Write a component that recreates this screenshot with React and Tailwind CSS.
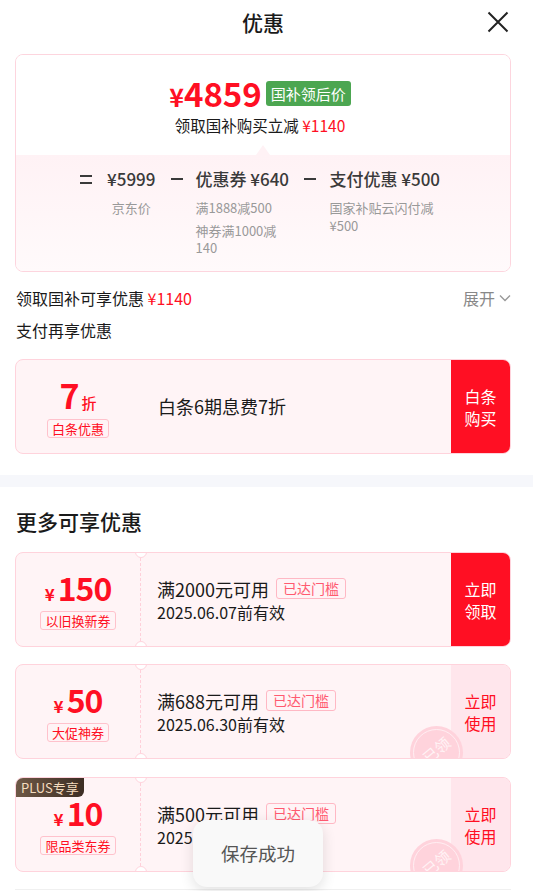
import React from "react";

const RED = "text-[#ff0f23]";

function Stamp({ top }) {
  return (
    <div
      className="absolute left-[394px] h-[53px] w-[53px] rounded-full bg-[#ffd3dc] p-[3px]"
      style={{ top }}
    >
      <div className="flex h-full w-full items-center justify-center rounded-full border border-[#ffeef2] bg-[#ffd3dc]">
        <span className="-mt-[6px] rotate-[-40deg] text-[15px] leading-none text-[#fff4f6]">已领</span>
      </div>
    </div>
  );
}

function Bar() {
  return <div className="h-[2px] w-[12px] bg-[#3a3a3a]" />;
}

function Coupon({ amount, label, cond, date, btn, claimed, plus, className = "" }) {
  return (
    <div
      className={
        "relative ml-[15px] mr-[22px] flex h-[95px] overflow-hidden rounded-[8px] border border-[#ffd3dc] bg-[#fff4f6] " +
        className
      }
    >
      <div className="absolute left-[119px] top-[-7px] h-[12px] w-[12px] rounded-full border border-[#ffd3dc] bg-white" />
      <div className="absolute bottom-[-7px] left-[119px] h-[12px] w-[12px] rounded-full border border-[#ffd3dc] bg-white" />
      {plus && (
        <div className="absolute left-0 top-0 z-10 rounded-br-[6px] bg-gradient-to-r from-[#6e5846] to-[#3d2e24] px-[5px] text-[13px] leading-[19px] text-[#f4dcbf]">
          PLUS专享
        </div>
      )}
      <div className="flex w-[124px] flex-col items-center justify-center pt-[2px]">
        <div className={"flex items-baseline font-bold leading-none " + RED}>
          <span className="mr-[3px] text-[17px]">¥</span>
          <span className="text-[32px] tracking-[-1px]">{amount}</span>
        </div>
        <div className="mt-[8px] rounded-[3px] border border-[#ffc2cc] px-[4px] text-[13px] leading-[17px] text-[#ff0f23]">
          {label}
        </div>
      </div>
      <div className="border-l border-dashed border-[#ffd0da]" />
      <div className="flex flex-1 flex-col justify-center pl-[16px]">
        <div className="flex h-[24px] items-center">
          <span className="text-[18px] leading-[24px] text-[#1a1a1a]">{cond}</span>
          <span className="ml-[7px] rounded-[3px] border border-[#ffb8c4] px-[6px] text-[14px] leading-[19px] text-[#ff5a70]">
            已达门槛
          </span>
        </div>
        <div className="h-[22px] text-[16px] leading-[22px] text-[#1a1a1a]">{date}</div>
      </div>
      <div
        className={
          "flex w-[59px] flex-col items-center justify-center text-[16px] leading-[22px] " +
          (claimed ? "bg-[#ffe6ec] text-[#ff0f23]" : "bg-[#ff0f23] text-white")
        }
      >
        {btn.map((t) => (
          <span key={t}>{t}</span>
        ))}
      </div>
      {claimed && <Stamp top={61} />}
    </div>
  );
}

export default function App() {
  return (
    <div className="relative h-[891px] w-[533px] overflow-hidden bg-white [font-family:'Noto_Sans_CJK_SC','Noto_Sans',sans-serif]">
      {/* header */}
      <div className="grid h-[44px] grid-cols-[1fr_auto_1fr] items-center pr-[7px]">
        <div />
        <div className="text-[21px] font-medium leading-none text-[#1a1a1a]">优惠</div>
        <div className="flex justify-end pr-[17px]">
          <svg width="22" height="22" viewBox="0 0 22 22" fill="none" stroke="#222" strokeWidth="2">
            <path d="M1.5 1.5 L20.5 20.5 M20.5 1.5 L1.5 20.5" />
          </svg>
        </div>
      </div>

      {/* summary card */}
      <div className="ml-[15px] mr-[22px] mt-[10px] overflow-hidden rounded-[8px] border border-[#fdd5de]">
        <div className="flex h-[100px] flex-col items-center bg-white pt-[22px]">
          <div className="flex h-[32px] items-center pr-[6px]">
            <div className={"flex items-baseline font-bold leading-none " + RED}>
              <span className="text-[25px]">¥</span>
              <span className="text-[33px]">4859</span>
            </div>
            <span className="ml-[4px] rounded-[3px] bg-[#4ca651] px-[5px] text-[15px] leading-[25px] text-white">
              国补领后价
            </span>
          </div>
          <div className="mt-[5px] pr-[6px] text-[15.5px] leading-[22px] text-[#1a1a1a]">
            领取国补购买立减 <span className="text-[#ff0f23]">¥1140</span>
          </div>
        </div>
        <div className="relative bg-gradient-to-b from-[#fff2f5] to-[#fffafb] pb-[15px] pl-[64px] pt-[12px]">
          <div className="absolute left-1/2 top-[-10px] h-0 w-0 -translate-x-1/2 border-x-[7px] border-b-[10px] border-x-transparent border-b-[#fff2f5]" />
          <div className="flex items-start text-[#3a3a3a]">
            <div className="flex h-[24px] w-[12px] flex-col justify-center gap-[5px]">
              <Bar />
              <Bar />
            </div>
            <div className="ml-[15px] flex flex-col items-center">
              <div className="text-[17px] font-medium leading-[24px]">¥5999</div>
              <div className="mt-[8px] text-[13px] leading-[17px] text-[#999]">京东价</div>
            </div>
            <div className="ml-[16px] flex h-[24px] w-[12px] items-center">
              <Bar />
            </div>
            <div className="ml-[12px] w-[94px]">
              <div className="whitespace-nowrap text-[17px] font-medium leading-[24px]">优惠券 ¥640</div>
              <div className="mt-[8px] text-[13px] leading-[17px] text-[#999]">满1888减500</div>
              <div className="mt-[6px] text-[13px] leading-[17px] text-[#999]">神券满1000减140</div>
            </div>
            <div className="ml-[15px] flex h-[24px] w-[13px] items-center">
              <Bar />
            </div>
            <div className="ml-[12px] w-[108px]">
              <div className="whitespace-nowrap text-[17px] font-medium leading-[24px]">支付优惠 ¥500</div>
              <div className="mt-[8px] text-[13px] leading-[18px] text-[#999]">国家补贴云闪付减¥500</div>
            </div>
          </div>
        </div>
      </div>

      {/* lines */}
      <div className="ml-[16px] mr-[22px] mt-[14px] flex h-[24px] items-center justify-between">
        <div className="text-[16px] leading-[24px] text-[#1a1a1a]">
          领取国补可享优惠 <span className="text-[#ff0f23]">¥1140</span>
        </div>
        <div className="flex items-center text-[16px] leading-[24px] text-[#888]">
          展开
          <svg className="ml-[4px]" width="12" height="8" viewBox="0 0 12 8" fill="none" stroke="#999" strokeWidth="1.4">
            <path d="M1 1.5 L6 6.5 L11 1.5" />
          </svg>
        </div>
      </div>
      <div className="mx-[16px] mt-[8px] h-[24px] text-[16px] leading-[24px] text-[#1a1a1a]">支付再享优惠</div>

      {/* baitiao card */}
      <div className="ml-[15px] mr-[22px] mt-[17px] flex h-[95px] overflow-hidden rounded-[8px] border border-[#ffd3dc] bg-[#fff4f6]">
        <div className="flex w-[124px] flex-col items-center justify-center pt-[2px]">
          <div className={"flex items-baseline font-bold leading-none " + RED}>
            <span className="text-[34px]">7</span>
            <span className="ml-[2px] text-[15px] font-medium">折</span>
          </div>
          <div className="mt-[7px] rounded-[3px] border border-[#ffc2cc] px-[4px] text-[13px] leading-[17px] text-[#ff0f23]">
            白条优惠
          </div>
        </div>
        <div className="flex flex-1 items-center pl-[18px] text-[18px] text-[#1a1a1a]">白条6期息费7折</div>
        <div className="flex w-[59px] flex-col items-center justify-center bg-[#ff0f23] text-[16px] leading-[22px] text-white">
          <span>白条</span>
          <span>购买</span>
        </div>
      </div>

      <div className="mt-[21px] h-[12px] bg-[#f6f7fb]" />

      <div className="mx-[16px] mt-[17px] h-[34px] text-[21px] font-medium leading-[34px] text-[#1a1a1a]">更多可享优惠</div>

      <Coupon className="mt-[14px]" amount="150" label="以旧换新券" cond="满2000元可用" date="2025.06.07前有效" btn={["立即", "领取"]} />
      <Coupon className="mt-[17px]" amount="50" label="大促神券" cond="满688元可用" date="2025.06.30前有效" btn={["立即", "使用"]} claimed />
      <Coupon className="mt-[18px]" amount="10" label="限品类东券" cond="满500元可用" date="2025.06.30前有效" btn={["立即", "使用"]} claimed plus />

      <div className="ml-[15px] mr-[22px] mt-[17px] border-t border-[#f0f0f0]" />

      {/* toast */}
      <div className="absolute left-[193px] top-[820px] flex h-[67px] w-[130px] items-center justify-center rounded-[14px] bg-[#f9f9f9] shadow-[0_4px_14px_rgba(0,0,0,0.12)]">
        <span className="text-[18.5px] text-[#555]">保存成功</span>
      </div>
    </div>
  );
}
